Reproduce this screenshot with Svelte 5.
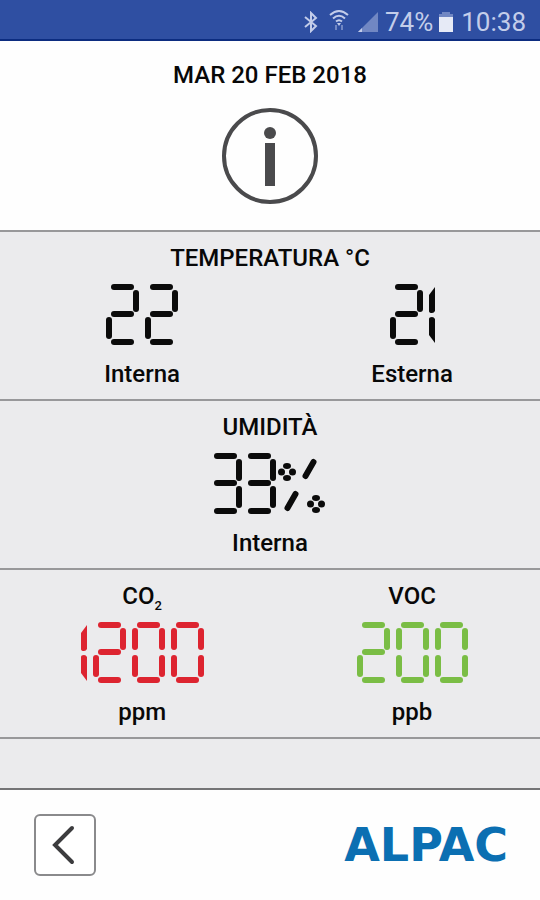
<script lang="ts">
  type Reading = { value: string; label: string; title?: string; sub?: string; tone?: string };

  const temperature: Reading[] = [
    { value: '22', label: 'Interna' },
    { value: '21', label: 'Esterna' }
  ];
  const humidity: Reading = { value: '33%', label: 'Interna' };
  const air: Reading[] = [
    { title: 'CO', sub: '2', value: '1200', label: 'ppm', tone: 'red' },
    { title: 'VOC', value: '200', label: 'ppb', tone: 'green' }
  ];

  // segment name -> x1, y1, x2, y2 on a 33x61 cell
  const segments: Record<string, number[]> = {
    a: [8, 3, 25, 3],
    b: [30, 9, 30, 25],
    c: [30, 36, 30, 52],
    d: [8, 58, 25, 58],
    e: [3, 36, 3, 52],
    f: [3, 9, 3, 25],
    g: [8, 30, 25, 30]
  };
  const lit: Record<string, string> = {
    '0': 'abcdef',
    '2': 'abdeg',
    '3': 'abcdg'
  };
</script>

{#snippet display(value: string, tone: string)}
  <div class="display {tone}" role="img" aria-label={value}>
    {#each value.split('') as ch}
      {#if ch === '1'}
        <svg width="6" height="61" viewBox="0 0 6 61">
          <path d="M6 3V27Q5 29 3 29Q0 29 0 27V11ZM6 59V35Q5 33 3 33Q0 33 0 35V51Z" />
        </svg>
      {:else if ch === '%'}
        <svg class="percent" width="48" height="61" viewBox="0 0 48 61">
          <path class="slash" d="M35.5 9L27.5 23M17.5 41L9.5 55" />
          {#each [[9, 19], [38, 51]] as [x, y]}
            <ellipse cx={x} cy={y - 6} rx="4" ry="3" />
            <ellipse cx={x} cy={y + 6} rx="4" ry="3" />
            <ellipse cx={x - 5.5} cy={y} rx="3.5" ry="3.5" />
            <ellipse cx={x + 5.5} cy={y} rx="3.5" ry="3.5" />
          {/each}
        </svg>
      {:else}
        <svg
          width={ch === '3' ? 28 : 33}
          height="61"
          viewBox={ch === '3' ? '5 0 28 61' : '0 0 33 61'}
        >
          {#each lit[ch].split('') as name}
            {@const [x1, y1, x2, y2] = segments[name]}
            <line {x1} {y1} {x2} {y2} />
          {/each}
        </svg>
      {/if}
    {/each}
  </div>
{/snippet}

<div class="screen">
  <div class="status">
    <svg width="16" height="22" viewBox="0 0 16 22" aria-label="Bluetooth">
      <path class="bt" d="M2 6L13 15L8 20V2L13 7L2 16" />
    </svg>
    <svg class="wifi" width="20" height="24" viewBox="0 0 20 24" aria-label="Wi-Fi">
      <path class="arc" d="M1 7Q10-1 19 7M4 10.500Q10 5 16 10.500M7 13.500Q10 11 13 13.500" />
      <path class="fill" d="M8 15h4l-2 3z" />
      <path class="dim" d="M7 17v5M13 17v5" />
    </svg>
    <svg class="signal" width="22" height="20" viewBox="0 0 22 20" aria-label="Signal">
      <path class="weak" d="M21 0V20H1Z" />
      <path class="fill" d="M5 16V20H1Z" />
    </svg>
    <span>74%</span>
    <svg class="battery" width="14" height="20" viewBox="0 0 14 20" aria-label="Battery">
      <path class="weak" d="M3 0H11V2H14V6H0V2H3Z" />
      <path class="full" d="M0 5H14V20H0Z" />
    </svg>
    <span>10:38</span>
  </div>

  <header>
    <h1>MAR 20 FEB 2018</h1>
    <svg width="96" height="96" viewBox="0 0 96 96" aria-label="Info">
      <circle class="ring" cx="48" cy="48" r="46" />
      <circle class="ink" cx="48" cy="25" r="6" />
      <rect class="ink" x="43" y="35" width="10" height="43" />
    </svg>
  </header>

  <section>
    <h2>TEMPERATURA °C</h2>
    <div class="pair">
      {#each temperature as item}
        <div class="reading">
          {@render display(item.value, '')}
          <p>{item.label}</p>
        </div>
      {/each}
    </div>
  </section>

  <section>
    <h2>UMIDITÀ</h2>
    <div class="reading">
      {@render display(humidity.value, '')}
      <p>{humidity.label}</p>
    </div>
  </section>

  <section class="pair">
    {#each air as item}
      <div class="reading">
        <h2>{item.title}{#if item.sub}<sub>{item.sub}</sub>{/if}</h2>
        {@render display(item.value, item.tone ?? '')}
        <p>{item.label}</p>
      </div>
    {/each}
  </section>

  <div class="spacer"></div>

  <footer>
    <button type="button" aria-label="Indietro">
      <svg width="24" height="40" viewBox="0 0 24 40">
        <path d="M20 3L3 20L20 37" />
      </svg>
    </button>
    <span class="brand">ALPAC</span>
  </footer>
</div>

<style>
  :global(body) {
    margin: 0;
    background: #fff;
  }

  .screen {
    min-height: 100vh;
    display: flex;
    flex-direction: column;
    background: #fefefe;
    color: #080808;
    font-family: Roboto, sans-serif;
  }

  svg {
    display: block;
    flex: none;
  }

  .status {
    box-sizing: border-box;
    height: 41px;
    padding: 4px 14px 0 0;
    border-bottom: 2px solid #0c2c80;
    display: flex;
    align-items: center;
    justify-content: flex-end;
    gap: 6px;
    background: #2f4fa2;
    color: #c3cdea;
    font-size: 26px;
    line-height: 36px;
  }

  .status path {
    fill: #c3cdea;
  }

  .status .bt,
  .status .arc,
  .status .dim {
    fill: none;
    stroke: #c3cdea;
    stroke-width: 2;
  }

  .status .dim,
  .status .weak {
    opacity: 0.45;
  }

  .status .full {
    fill: #e6eaf6;
  }

  .wifi {
    margin: 0 2px 4px 4px;
  }

  .battery {
    margin-right: 2px;
  }

  header {
    height: 189px;
    display: flex;
    flex-direction: column;
    align-items: center;
  }

  h1,
  h2,
  p {
    margin: 0;
    font-size: 24px;
    font-weight: 500;
    line-height: 28px;
    text-align: center;
  }

  h1 {
    margin: 20px 0 19px;
  }

  .ring {
    fill: none;
    stroke: #4a4a4c;
    stroke-width: 4;
  }

  .ink {
    fill: #4a4a4c;
  }

  section {
    box-sizing: border-box;
    height: 169px;
    padding-top: 12px;
    border-top: 2px solid #98989a;
    background: #ebebed;
  }

  .pair {
    display: grid;
    grid-template-columns: 10fr 9fr;
  }

  .reading {
    display: flex;
    flex-direction: column;
    align-items: center;
  }

  .display {
    display: flex;
    gap: 6px;
    margin: 12px 0 15px;
    color: #0b0b0b;
  }

  .display.red {
    color: #dd2430;
  }

  .display.green {
    color: #7abd45;
  }

  .display line,
  .display .slash {
    fill: none;
    stroke: currentColor;
    stroke-width: 6;
    stroke-linecap: round;
  }

  .display path,
  .display ellipse {
    fill: currentColor;
  }

  .percent {
    margin-left: -4px;
  }

  sub {
    font-size: 13px;
    line-height: 0;
  }

  .spacer {
    box-sizing: border-box;
    height: 51px;
    border-top: 2px solid #98989a;
    background: #ebebed;
  }

  footer {
    flex: 1;
    padding: 0 32px 0 34px;
    border-top: 2px solid #747476;
    display: flex;
    align-items: center;
    justify-content: space-between;
  }

  button {
    width: 62px;
    height: 62px;
    padding: 0 2px 0 0;
    border: 2px solid #8a8a8c;
    border-radius: 6px;
    display: flex;
    align-items: center;
    justify-content: center;
    background: #fff;
  }

  button path {
    fill: none;
    stroke: #3c3c3e;
    stroke-width: 4;
    stroke-linecap: round;
  }

  .brand {
    color: #0b6fb2;
    font-family: "DejaVu Sans", sans-serif;
    font-size: 46px;
    font-weight: 700;
    line-height: 52px;
  }
</style>
